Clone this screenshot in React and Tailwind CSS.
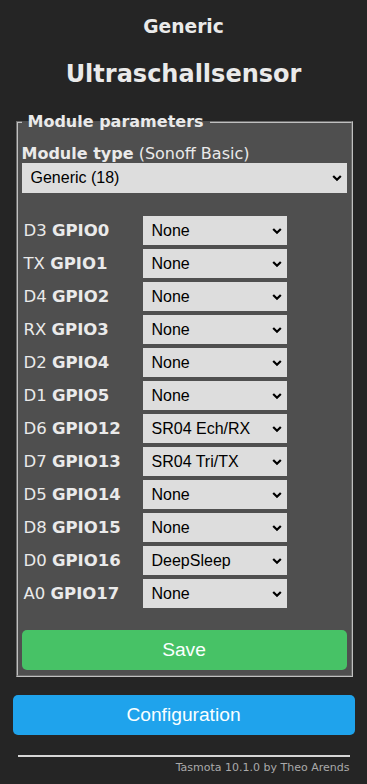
import React, { useState } from "react";

const pins = [
  { pin: "D3", gpio: "GPIO0", value: "None" },
  { pin: "TX", gpio: "GPIO1", value: "None" },
  { pin: "D4", gpio: "GPIO2", value: "None" },
  { pin: "RX", gpio: "GPIO3", value: "None" },
  { pin: "D2", gpio: "GPIO4", value: "None" },
  { pin: "D1", gpio: "GPIO5", value: "None" },
  { pin: "D6", gpio: "GPIO12", value: "SR04 Ech/RX" },
  { pin: "D7", gpio: "GPIO13", value: "SR04 Tri/TX" },
  { pin: "D5", gpio: "GPIO14", value: "None" },
  { pin: "D8", gpio: "GPIO15", value: "None" },
  { pin: "D0", gpio: "GPIO16", value: "DeepSleep" },
  { pin: "A0", gpio: "GPIO17", value: "None" },
];

const options = ["None", "SR04 Ech/RX", "SR04 Tri/TX", "DeepSleep"];

const Chevron = () => (
  <svg
    className="pointer-events-none absolute right-[5px] top-1/2 -translate-y-1/2"
    width="10"
    height="7"
    viewBox="0 0 10 7"
  >
    <path d="M1.2 1.5 L5 5.2 L8.8 1.5" fill="none" stroke="#000" strokeWidth="2.2" />
  </svg>
);

const Select = ({ value, onChange, items, className }) => (
  <div className={`relative ${className}`}>
    <select
      value={value}
      onChange={(e) => onChange(e.target.value)}
      className="h-full w-full appearance-none bg-[#dddddd] pl-[9px] pr-6 font-['Liberation_Sans',Arial,sans-serif] text-[16px] text-black outline-none"
    >
      {items.map((o) => (
        <option key={o}>{o}</option>
      ))}
    </select>
    <Chevron />
  </div>
);

export default function App() {
  const [moduleType, setModuleType] = useState("Generic (18)");
  const [values, setValues] = useState(pins.map((p) => p.value));

  return (
    <div className="min-h-screen bg-[#252525] font-['DejaVu_Sans',Verdana,sans-serif] text-[#eaeaea]">
      <div className="mx-auto w-[342px] pb-[10px]">
        <h3 className="pt-[16px] text-center text-[18.7px] font-bold leading-[22px]">
          Generic
        </h3>
        <h2 className="mt-[23px] text-center text-[24px] font-bold leading-[27px]">
          Ultraschallsensor
        </h2>

        <fieldset className="mt-[24px] ml-[3px] mr-[2px] border-2 border-[#c0c0c0] bg-[#4f4f4f] px-[4px] pb-[5px] [border-style:groove]">
          <legend className="px-[6px] text-[16px] font-bold leading-[19px]">
            Module parameters
          </legend>
          <div className="pt-[13px] text-[16px] leading-[19px]">
            <b>Module type</b> (Sonoff Basic)
          </div>
          <Select
            value={moduleType}
            onChange={setModuleType}
            items={["Generic (18)", "Sonoff Basic (1)"]}
            className="h-[30px] w-full"
          />

          <div className="mt-[23px] flex flex-col gap-[4px]">
            {pins.map((p, i) => (
              <div key={p.gpio} className="flex items-center">
                <div className="w-[121px] pl-[2px] text-[16.5px] leading-[19px]">
                  {p.pin} <b>{p.gpio}</b>
                </div>
                <Select
                  value={values[i]}
                  onChange={(v) =>
                    setValues((old) => old.map((x, j) => (j === i ? v : x)))
                  }
                  items={options}
                  className="h-[29px] w-[144px]"
                />
              </div>
            ))}
          </div>

          <button className="mt-[22px] h-[40px] w-full rounded-[5px] bg-[#47c266] font-['Liberation_Sans',Arial,sans-serif] text-[19.2px] text-[#faffff]">
            Save
          </button>
        </fieldset>

        <button className="mt-[18px] h-[40px] w-full rounded-[5px] bg-[#1fa3ec] font-['Liberation_Sans',Arial,sans-serif] text-[19.2px] text-[#faffff]">
          Configuration
        </button>

        <div className="mx-[5px] mt-[20px] h-[2px] bg-[#d6d6d6]" />
        <p className="mt-[4px] pr-[5px] text-right text-[11px] leading-[14px] text-[#aaaaaa]">
          Tasmota 10.1.0 by Theo Arends
        </p>
      </div>
    </div>
  );
}
